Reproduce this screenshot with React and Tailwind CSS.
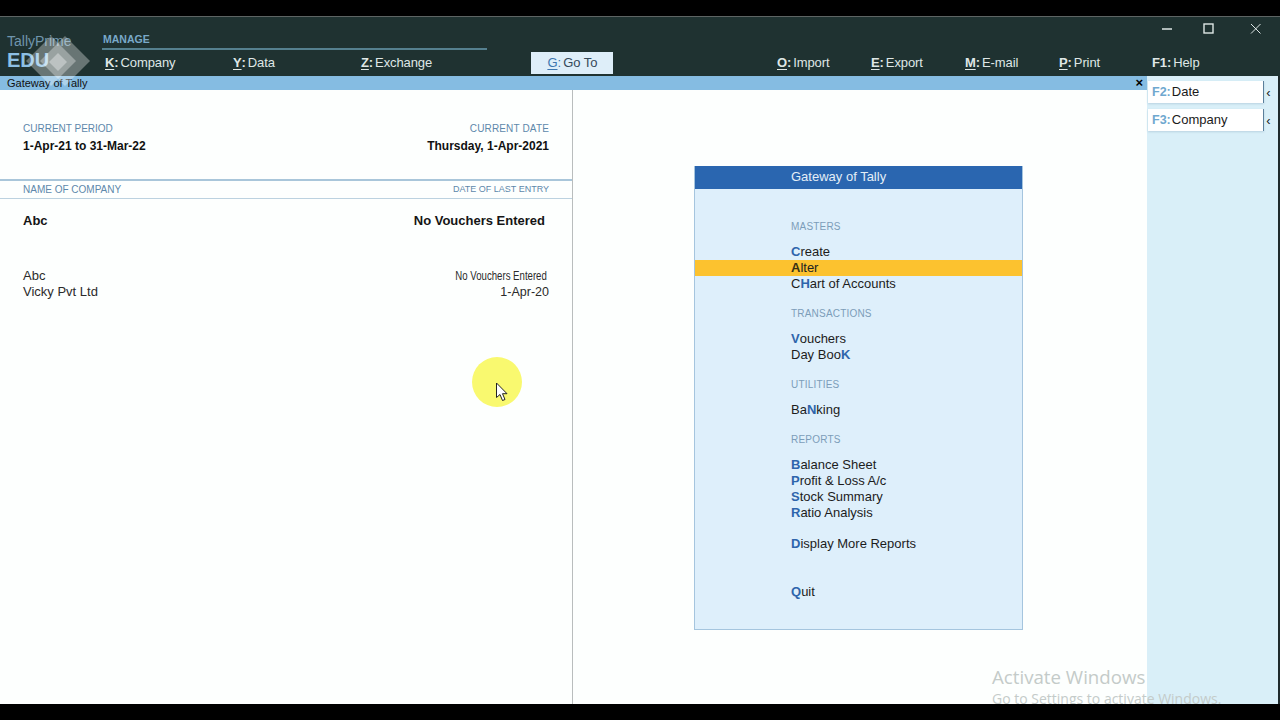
const sans = { fontFamily: '"Liberation Sans", Arial, sans-serif' }

function TopItem({ k, label, className = '' }) {
  return (
    <div className={`flex items-baseline text-[13px] tracking-[-0.1px] text-[#dfe7e6] ${className}`}>
      <span className="font-bold underline underline-offset-2">{k}</span>
      <span className="font-bold mr-[2px]">:</span>
      <span>{label}</span>
    </div>
  )
}

function SideButton({ k, label }) {
  return (
    <div className="flex h-[22px] w-[130px] items-center text-[13px] text-[#1a1a1a]">
      <div className="ml-px flex h-full w-[116px] items-center border-r border-[#5b7f9b] bg-white shadow-[0_1px_2px_#b9d2e0]">
        <span className="ml-[4px] text-[12.5px] font-bold text-[#6fa8cf]">{k}:</span>
        <span className="ml-px">{label}</span>
      </div>
      <span className="w-[9px] text-center text-[13px] leading-none">‹</span>
    </div>
  )
}

function Hot({ text, at = 0, active }) {
  return (
    <div className={`h-4 pl-[96px] text-[13px] leading-4 ${active ? 'bg-[#fcc22f] text-[#222]' : 'text-[#1c1c1c]'}`}>
      {text.slice(0, at)}
      <span className={active ? 'font-bold text-[#3b3214]' : 'font-bold text-[#2e65ac]'}>{text[at]}</span>
      {text.slice(at + 1)}
    </div>
  )
}

function Group({ children, className = '' }) {
  return <div className={`pl-[96px] text-[10px] leading-4 tracking-[0.2px] text-[#7c9db9] ${className}`}>{children}</div>
}

export default function App() {
  return (
    <div style={sans} className="relative h-[720px] w-[1280px] overflow-hidden bg-black">
      <div className="h-4" />
      <div className="h-px bg-[#5d6463]" />

      {/* Title bar */}
      <header className="relative flex h-[59px] bg-[#1f3231] pr-[2px]">
        <div className="w-[102px] pl-[7px] pt-[16px]">
          <div className="text-[14px] leading-4 text-[#6f95ac]">TallyPrime</div>
          <div className="text-[20px] leading-[22px] font-bold text-[#8cc0e4]">EDU</div>
        </div>
        <div className="w-[385px] pt-[16px]">
          <div className="border-b-2 border-[#55808f] pb-[2px] pl-px text-[10.5px] leading-[13px] font-bold text-[#79a9c9]">MANAGE</div>
          <div className="mt-[3px] flex pl-[3px]">
            <TopItem k="K" label="Company" className="w-[128px]" />
            <TopItem k="Y" label="Data" className="w-[128px]" />
            <TopItem k="Z" label="Exchange" />
          </div>
        </div>
        <div className="ml-[44px] mt-[35px] flex h-[22px] w-[82px] items-center justify-center bg-[#deeef9] pl-[1px] text-[13px] text-[#34495a]">
          <span className="text-[#3d76b0] underline underline-offset-2">G</span>
          <span className="mr-[2px] text-[#3d76b0]">:</span>
          Go To
        </div>
        <div className="ml-[164px] flex pt-[36px]">
          <TopItem k="O" label="Import" className="w-[94px]" />
          <TopItem k="E" label="Export" className="w-[94px]" />
          <TopItem k="M" label="E-mail" className="w-[94px]" />
          <TopItem k="P" label="Print" className="w-[93px]" />
          <div className="flex items-baseline text-[13px] tracking-[-0.1px] text-[#dfe7e6]"><span className="mr-[2px] font-bold">F1:</span>Help</div>
        </div>
        {/* window controls */}
        <svg className="absolute right-[14px] top-px" width="104" height="20" viewBox="0 0 104 20" fill="none" stroke="#dfe7e6">
          <path d="M0 11h10" strokeWidth="1.5" />
          <rect x="42" y="6" width="9" height="9" strokeWidth="1.4" />
          <path d="M89 6l9.500 9.500M98.500 6L89 15.500" strokeWidth="1" />
        </svg>
      </header>

      <div className="relative flex h-[628px]">
        <main className="flex w-[1147px] flex-col">
          {/* Gateway strip */}
          <div className="relative h-[14px] bg-[#85bce2] pl-[7px] text-[11px] leading-[14px] text-[#111]">
            Gateway of Tally
            <span className="absolute right-[4px] top-0 text-[13px] leading-[14px] font-bold text-black">×</span>
          </div>

          <div className="flex flex-1 bg-[#fdfffe]">
            {/* Company panel */}
            <section className="w-[573px] border-r border-[#b9bdbd]">
              <div className="flex h-[89px] justify-between pl-[23px] pr-[23px] pt-[32px]">
                <div>
                  <div className="text-[10px] leading-[14px] text-[#5e88ab]">CURRENT PERIOD</div>
                  <div className="mt-[2px] text-[12px] leading-4 font-bold text-[#111]">1-Apr-21 to 31-Mar-22</div>
                </div>
                <div className="text-right">
                  <div className="text-[10px] leading-[14px] tracking-[0.15px] text-[#5e88ab]">CURRENT DATE</div>
                  <div className="mt-[2px] text-[12px] leading-4 font-bold text-[#111]">Thursday, 1-Apr-2021</div>
                </div>
              </div>
              <div className="flex h-[20px] items-center justify-between border-y border-t-2 border-[#a9c6da] border-b-[#bcd2e0] pl-[23px] pr-[23px] text-[10px] text-[#5e88ab]">
                <span>NAME OF COMPANY</span>
                <span className="text-[9px]">DATE OF LAST ENTRY</span>
              </div>
              <div className="flex justify-between pl-[23px] pr-[27px] pt-[14px] text-[13px] leading-4 font-bold text-[#151515]">
                <span>Abc</span>
                <span>No Vouchers Entered</span>
              </div>
              <div className="mt-[39px] flex justify-between pl-[23px] pr-[25px] text-[13px] leading-4 text-[#2b2b2b]">
                <span>Abc</span>
                <span className="origin-right scale-x-[0.77] text-[12.5px] whitespace-nowrap">No Vouchers Entered</span>
              </div>
              <div className="flex justify-between pl-[23px] pr-[23px] text-[13px] leading-4 text-[#2b2b2b]">
                <span>Vicky Pvt Ltd</span>
                <span className="text-[12.5px]">1-Apr-20</span>
              </div>
            </section>

            {/* Gateway menu */}
            <section className="flex-1 pl-[121px] pt-[76px]">
              <div className="h-[464px] w-[329px] border border-[#a5c5de] border-t-0 bg-[#deeffb]">
                <div className="h-[23px] bg-[#2a66b0] pl-[96px] text-[13px] leading-[22px] text-[#e4eef7]">Gateway of Tally</div>
                <Group className="mt-[30px]">MASTERS</Group>
                <div className="mt-[9px]">
                  <Hot text="Create" />
                  <Hot text="Alter" active />
                  <Hot text="CHart of Accounts" at={1} />
                </div>
                <Group className="mt-[14px]">TRANSACTIONS</Group>
                <div className="mt-[9px]">
                  <Hot text="Vouchers" />
                  <Hot text="Day BooK" at={7} />
                </div>
                <Group className="mt-[14px]">UTILITIES</Group>
                <div className="mt-[9px]"><Hot text="BaNking" at={2} /></div>
                <Group className="mt-[14px]">REPORTS</Group>
                <div className="mt-[9px]">
                  <Hot text="Balance Sheet" />
                  <Hot text="Profit & Loss A/c" />
                  <Hot text="Stock Summary" />
                  <Hot text="Ratio Analysis" />
                </div>
                <div className="mt-[15px]"><Hot text="Display More Reports" /></div>
                <div className="mt-[32px]"><Hot text="Quit" /></div>
              </div>
            </section>
          </div>
        </main>

        {/* Right button bar */}
        <aside className="flex w-[131px] flex-col gap-[6px] bg-[#d9eff8] pt-[5px]">
          <SideButton k="F2" label="Date" />
          <SideButton k="F3" label="Company" />
        </aside>
        <div className="w-[2px] bg-[#1f2a2c]" />

        {/* Activate Windows watermark */}
        <div className="pointer-events-none absolute left-[992px] top-[588px] whitespace-nowrap text-[#c4cbc9]" style={{ fontFamily: '"Open Sans", sans-serif' }}>
          <div className="text-[18.7px] leading-[26px]">Activate Windows</div>
          <div className="text-[14px] leading-[18px]">Go to Settings to activate Windows.</div>
        </div>

        {/* Cursor highlight */}
        <div className="absolute left-[472px] top-[281px] h-[50px] w-[50px] rounded-full bg-[#f9f96f]" />
        <svg className="absolute left-[495px] top-[306px]" width="14" height="20" viewBox="0 0 14 20">
          <path d="M1.500 1v14.500l3.500-3 2.500 6 2.500-1-2.500-5.800h4.500z" fill="#fff" stroke="#222" strokeWidth="1" />
        </svg>
      </div>

      {/* Logo watermark */}
      <svg className="pointer-events-none absolute left-[26px] top-[36px]" width="68" height="52" viewBox="0 0 68 52">
        <path d="M25 0l25 25-25 25L0 25z" fill="#fff" opacity="0.33" />
        <path d="M39 0l25 25-25 25-25-25z" fill="#fff" opacity="0.33" />
        <path d="M32 17l9 9-9 9-9-9z" fill="#fff" opacity="0.35" />
      </svg>

      <div className="absolute bottom-0 left-0 h-4 w-full bg-black" />
    </div>
  )
}
